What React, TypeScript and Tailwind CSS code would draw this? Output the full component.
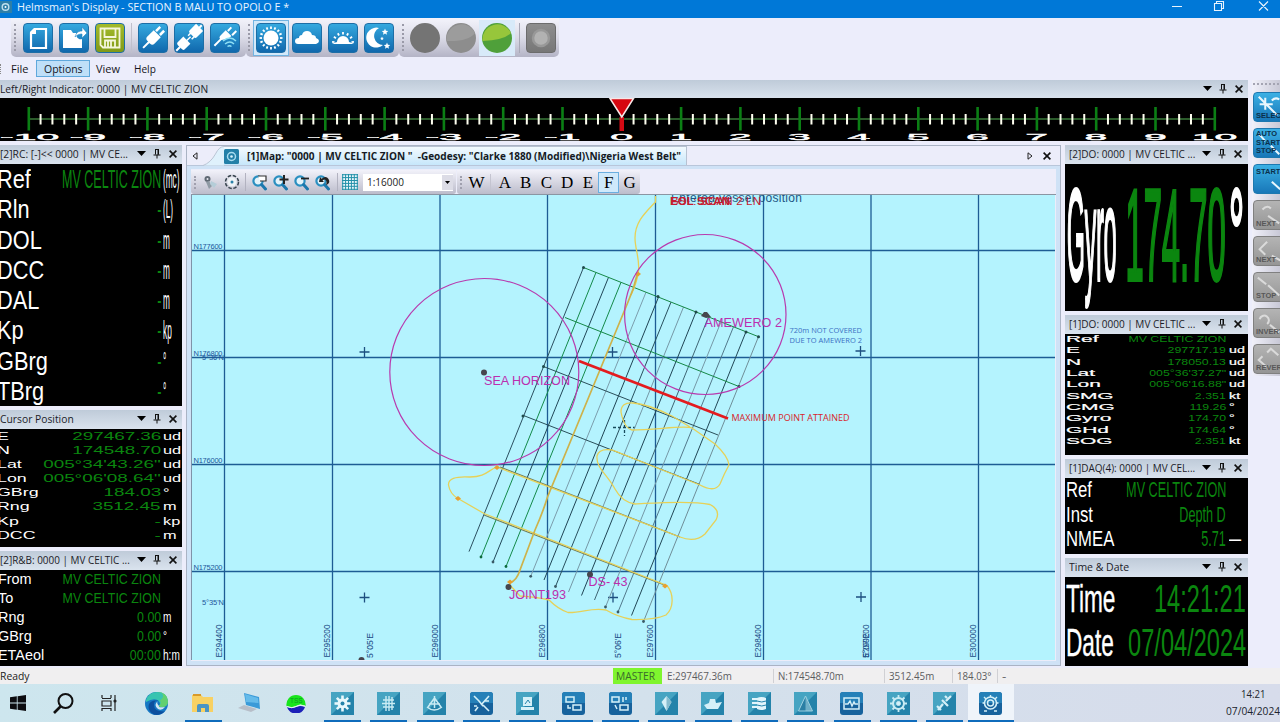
import React, { useLayoutEffect, useRef } from "react";

/* Text squeezed or widened so that it fills the width of its box. */
function Fit({ className = "", children }: { className?: string; children: string }) {
  const box = useRef<HTMLSpanElement>(null);
  const ink = useRef<HTMLSpanElement>(null);
  useLayoutEffect(() => {
    if (box.current && ink.current) {
      const s = box.current.clientWidth / ink.current.offsetWidth;
      ink.current.style.transform = `scaleX(${s})`;
    }
  }, []);
  return (
    <span ref={box} className={`block shrink-0 whitespace-nowrap ${className}`}>
      <span ref={ink} className="inline-block origin-left">{children}</span>
    </span>
  );
}

function Pin() {
  return (
    <svg className="h-[10px] w-[8px]" viewBox="0 0 8 10" fill="none" stroke="#111" strokeWidth="1">
      <path d="M2 .5h4M2.5 .5v5M5.5 .5v5M5 1v5M.5 6h7M4 6v3.5" />
    </svg>
  );
}
function Cross() {
  return (
    <svg className="h-[8px] w-[8px]" viewBox="0 0 8 8" stroke="#111" strokeWidth="1.6">
      <path d="M.6.6l6.8 6.8M7.4.6L.6 7.4" />
    </svg>
  );
}
function Caret() {
  return (
    <svg className="-mr-px h-[5px] w-[9px]" viewBox="0 0 9 5" fill="#000"><path d="M0 0h9L4.5 5z" /></svg>
  );
}

function Header({ title, fit, pad = "pr-[5px]" }: { title: string; fit: string; pad?: string }) {
  return (
    <div className={`flex h-[19px] shrink-0 items-center bg-gradient-to-b from-[#bfcbd9] to-[#dae3ee] pb-[2px] text-[11px] leading-[17px] text-[#1c1c28] ${pad}`}>
      <Fit className={fit}>{title}</Fit>
      <div className="flex-1" />
      <div className="flex items-center gap-[8px]">
        <Caret />
        <Pin />
        <Cross />
      </div>
    </div>
  );
}

type Row = [string, string, string];
function Readout({ rows, text, label, value, unit, unitBox, row }: {
  rows: Row[]; text: string; label: string; value: string; unit: string; unitBox: string; row: string;
}) {
  return (
    <div className={`font-['Liberation_Sans',sans-serif] ${text}`}>
      {rows.map((r, i) => (
        <div key={i} className={`flex justify-between whitespace-nowrap ${row}`}>
          <div className="w-[50px] shrink-0"><span className={`inline-block origin-left text-white ${label}`}>{r[0]}</span></div>
          <div className="flex w-[60px] flex-1 justify-end"><span className={`inline-block origin-right text-[#0b860f] ${value}`}>{r[1]}</span></div>
          <div className={`shrink-0 ${unitBox}`}><span className={`inline-block origin-left text-white ${unit}`}>{r[2]}</span></div>
        </div>
      ))}
    </div>
  );
}

/* ---------- main toolbar ---------- */
function Tile({ children, tone = "from-[#35a9df] to-[#1068ad]" }: { children?: React.ReactNode; tone?: string }) {
  return (
    <div className={`flex h-[30px] w-[30px] shrink-0 items-center justify-center rounded-[4px] border border-[#1d6ea6] bg-gradient-to-b ${tone}`}>
      <svg viewBox="0 0 30 30" className="h-[30px] w-[30px] shrink-0" fill="#fff">{children}</svg>
    </div>
  );
}
function Grip() {
  return <div className="h-[27px] w-0 border-l-2 border-dotted border-[#9a9aa8]" />;
}
const strip = "flex h-[39px] items-center rounded-b-[5px] bg-gradient-to-b from-[#f3f3fb] via-[#dcdce8] to-[#b4b4c6]";
const star = (x: number, y: number, s: number) =>
  Array.from({ length: 10 }, (_, i) => {
    const r = i % 2 ? s * 0.45 : s, a = (i * Math.PI) / 5 - Math.PI / 2;
    return `${x + r * Math.cos(a)},${y + r * Math.sin(a)}`;
  }).join(" ");

function Toolbar() {
  return (
    <div className="flex h-[40px] pl-[11px]">
      <div className={`${strip} w-[235px] pl-[3px]`}>
        <Grip />
        <div className="ml-[7px] flex gap-[6px]">
          <Tile><path d="M12 6h11v19H8V10z" fill="none" stroke="#fff" strokeWidth="2.2" /><path d="M7 11V9l4-4h2v6z" /></Tile>
          <Tile><path d="M4 7h8l2 3h3c0 5 3 7 6 6v9H4z" /><path d="M16 14c1-4 3-6 7-6V4l5 6-5 5v-4c-3 0-5 1-7 3z" stroke="#2486c4" strokeWidth=".6" /></Tile>
          <Tile tone="from-[#a3bb2b] to-[#819a17]"><path d="M5.5 5.500h19v19H8l-2.500-2.500zM9.500 5.500v8.500h11V5.500M10 24.500v-7h10v7M13 18v6M16 18v6" fill="none" stroke="#f4f6dc" strokeWidth="1.8" /></Tile>
        </div>
        <div className="ml-[6px] h-[30px] w-px bg-[#c0c0cc]" />
        <div className="ml-[6px] flex gap-[6px]">
          <Tile><g transform="rotate(45 15 15)"><path d="M10 9h10v9q0 3-3 3h-4q-3 0-3-3zM11 2h2.500v6H11zM16.500 2H19v6h-2.500zM14 21h2v8h-2z" /></g></Tile>
          <Tile><g transform="rotate(45 15 15)"><path d="M10 0h10v9q0 2-2 2h-6q-2 0-2-2zM12 11h1.500v3H12zM17 11h1.500v3H17zM14.500 13h1.500v5h-1.500zM10 18h10v8q0 2-3 2h-4q-3 0-3-2zM14-3h2v4h-2zM14 28h2v5h-2z" /></g></Tile>
          <Tile><g transform="rotate(45 15 15)"><path d="M10 9h8v4l-4 6h-2q-2 0-2-3zM11 3h2v5h-2zM17 2h2v6h-2zM12 19h2v9h-2z" /></g><g fill="none" stroke="#8fe0f5" strokeWidth="1.400"><path d="M13 18q7-6 13 0M15 21q5-4 9 0M17.500 23.500q2-1.500 4 0" /></g></Tile>
        </div>
      </div>
      <div className={`${strip} w-[153px] pl-[2px]`}>
        <Grip />
        <div className="ml-[3px] flex h-[36px] w-[36px] shrink-0 items-center justify-center border border-[#72b4e2] bg-[#d3e9fa]">
          <Tile>
            <circle cx="15" cy="15" r="7.500" />
            <g stroke="#fff" strokeWidth="1.8">
              {Array.from({ length: 16 }, (_, i) => <path key={i} d="M15 6V3.500" transform={`rotate(${i * 22.5} 15 15)`} />)}
            </g>
          </Tile>
        </div>
        <div className="ml-[3px] flex gap-[6px]">
          <Tile><path d="M6 21q-3 0-3-3t4-3q0-3 3-3 1-4 5-4t5 4q4 0 4 3 3 1 3 3t-3 3z" /></Tile>
          <Tile>
            <path d="M4 21q4-2 5-2a6 6 0 0 1 12 0q1 0 5 2z" />
            <g stroke="#fff" strokeWidth="1.800">
              {Array.from({ length: 7 }, (_, i) => <path key={i} d="M15 11.500V9" transform={`rotate(${i * 28 - 84} 15 20)`} />)}
            </g>
          </Tile>
          <Tile>
            <path d="M15 5a10 10 0 1 0 4 17A9 9 0 0 1 15 5z" />
            <polygon points={star(21, 9, 3.4)} /><polygon points={star(23, 23, 3.400)} /><polygon points={star(18, 15.500, 2)} />
          </Tile>
        </div>
      </div>
      <div className={`${strip} w-[160px] pl-[3px]`}>
        <Grip />
        <svg className="ml-[6px] h-[30px] w-[30px] shrink-0" viewBox="0 0 30 30"><circle cx="15" cy="15" r="15" fill="#747474" /></svg>
        <svg className="ml-[6px] h-[30px] w-[30px] shrink-0" viewBox="0 0 30 30"><circle cx="15" cy="15" r="15" fill="#8d8d8d" /><path d="M.5 18A15 15 0 0 1 29 10Q22 19 .5 18z" fill="#9c9c9c" /></svg>
        <div className="ml-[3px] flex h-[36px] w-[36px] shrink-0 items-center justify-center bg-[#d8eaf9]">
          <svg className="h-[30px] w-[30px]" viewBox="0 0 30 30"><circle cx="15" cy="15" r="15" fill="#4fa03a" /><path d="M.5 18A15 15 0 0 1 29 10Q22 17 .5 18z" fill="#97c63b" /></svg>
        </div>
        <div className="ml-[4px] h-[30px] w-px bg-[#a8a8b6]" />
        <div className="ml-[6px] flex h-[30px] w-[30px] shrink-0 items-center justify-center rounded-[4px] border border-[#6c6c6c] bg-gradient-to-b from-[#8e8e8e] to-[#777]">
          <svg viewBox="0 0 20 20" className="h-[20px] w-[20px]"><circle cx="10" cy="10" r="8" fill="#b2b2b2" stroke="#989898" strokeWidth="2.5" /></svg>
        </div>
      </div>
    </div>
  );
}

/* ---------- left/right indicator ---------- */
function Ruler() {
  const step = 59.3;
  return (
    <svg className="block h-[43px] w-[1248px] bg-black" viewBox="0 98 1248 43">
      <path d="M28 119H1215" stroke="#3a7a3a" strokeWidth="1.6" />
      {Array.from({ length: 21 }, (_, i) => (
        <g key={i}>
          {i < 20 && [1, 2, 3, 4].map((k) => (
            <rect key={k} x={27.7 + i * step + k * 11.86} y="114" width="2" height="10.500" fill="#fffff0" />
          ))}
          <rect x={27.500 + i * step} y="107" width="2.600" height="23.500" fill="#0b7f14" />
          <text transform={`translate(${28.6 + i * step + (i < 10 ? (i ? 0 : 1) : 0)} 139.5) scale(4.4 1)`} textAnchor="middle" fontSize="9.300" fill="#fff" stroke="#fff" strokeWidth=".35" fontFamily="Liberation Sans, sans-serif">{i - 10}</text>
        </g>
      ))}
      <rect x="619.500" y="117" width="4.500" height="14" fill="#d40a14" />
      <path d="M610 98.500h23.500l-11.700 18.500z" fill="#d6060f" stroke="#f7e6e6" strokeWidth="1.500" />
    </svg>
  );
}

/* ---------- chart ---------- */
const lineTones = ["#2b4f60", "#148a4a", "#214758", "#148a4a", "", "#7b9dac", "#1f4454", "#28505e", "#7598a6", "#1f4454", "#3e6573", "#7598a6", "#52788a", "#214756", "#6f8e98"];
const lineEnds: [number, number][] = [[469, 551.6], [481, 557], [493, 562], [506, 566.500], [518, 571], [530.7, 576.3], [544, 580], [555.500, 586.500], [568.500, 592], [581.500, 595.500], [594.500, 600], [605.500, 607], [618, 612], [631.500, 615.500], [643.500, 621.500]];
const eastings: [number, string][] = [[221.500, "E294400"], [329.500, "E295200"], [437.500, "E296000"], [544.500, "E296800"], [653, "E297600"], [760.500, "E298400"], [868.500, "E299200"], [975.500, "E300000"]];

function Chart() {
  return (
    <svg className="block h-[465px] w-[863px] bg-[#b4f3fe]" viewBox="192 195 863 465" fill="none" fontFamily="Liberation Sans, sans-serif">
      <g stroke="#1d5c94" strokeWidth="1.3">
        {[224.500, 332.500, 440, 547.500, 655.500, 763.500, 871, 978.500].map((x) => <path key={x} d={`M${x} 195V660`} />)}
        {[250.500, 357.500, 464.500, 571.500].map((y) => <path key={y} d={`M192 ${y}H1055`} />)}
      </g>
      <g fill="#1d569c" fontSize="7.500">
        <text x="193.500" y="248.500" textLength="29">N177600</text>
        <text x="193.500" y="355.500" textLength="29">N176800</text>
        <text x="202" y="360" textLength="22">5°36'N</text>
        <text x="193.500" y="462.500" textLength="29">N176000</text>
        <text x="193.500" y="569.500" textLength="29">N175200</text>
        <text x="202" y="605" textLength="22">5°35'N</text>
      </g>
      <g fill="#1b4b86" fontSize="8.500">
        {eastings.map(([x, s]) => <text key={s} transform={`translate(${x} 657.500) rotate(-90)`} textLength="33" lengthAdjust="spacingAndGlyphs">{s}</text>)}
        <text transform="translate(372.500 658) rotate(-90)" textLength="25" lengthAdjust="spacingAndGlyphs">5°05'E</text>
        <text transform="translate(620.500 658) rotate(-90)" textLength="25" lengthAdjust="spacingAndGlyphs">5°06'E</text>
        <text transform="translate(868.500 658) rotate(-90)" textLength="25" lengthAdjust="spacingAndGlyphs">5°07'E</text>
      </g>
      <g stroke="#1d4f80" strokeWidth="1.3">
        {[[364.500, 352], [612.500, 352], [860.500, 351], [364.500, 597.500], [613, 597.500], [861, 597]].map(([x, y]) => (
          <path key={`${x}-${y}`} d={`M${x - 5} ${y}h10M${x} ${y - 5}v10`} />
        ))}
        <path d="M613 427.500h22M624.500 420v16" stroke="#174b5c" strokeDasharray="3 2" />
      </g>

      <g strokeWidth="1">
        {lineEnds.map(([x, y], i) => i !== 4 && (
          <g key={i}>
            <path d={`M${583.500 + 12.500 * i} ${267.500 + 4.94 * i}L${x} ${y}`} stroke={lineTones[i]} />
            {[1, 2, 3, 5, 7, 11, 12, 14].includes(i) && <circle cx={x} cy={y} r="1.400" fill={i === 1 || i === 3 ? "#0d6a3c" : "#3a5a66"} />}
          </g>
        ))}
        <path d="M583.500 267.500L758.500 336.700M565 317.500L739 386.500" stroke="#158846" />
        <path d="M543.500 366.500L718 435M523.500 415.500L700 484.500" stroke="#2a4f5a" />
        <path d="M500 467L680 537M484 515L667 586" stroke="#6f7d5c" strokeWidth="1.200" />
        <g fill="#1f4a4a">
          {[[583.500, 267.500], [543.500, 366.500], [523, 416], [658, 296.500], [696, 312], [746, 332], [758.500, 336.700], [739, 386.500]].map(([x, y]) => <circle key={x} cx={x} cy={y} r="1.500" />)}
        </g>
      </g>

      <g stroke="#e6d158" strokeWidth="1.300">
        <path d="M655.500 196V202C645 213 635 222 635 238C635 250 641 262 638 274Q637 282 631 295" />
        <path d="M497 467L680 537Q695 543 705 534L716 520Q721 510 710 504.500C690 500 655 503 635 504Q622 502 615 489C607 474 596 468 597 456Q599 448 612 450L700 485Q715 493 720 484Q724 474 729 465Q728 456 715 444L692 428C685 425 655 430 632 430Q624 428 621 412Q621 402 633 403Q648 404 672 416L690 427" />
        <path d="M497 467C488 470 486 477 470 477C455 476 448 479 448.500 485Q450 494 458 498.500L484 513.500L667 585.500C674 594 674 608 666 615Q655 620 632 619.500Q618 617 606 610C592 607 582 613 568 612.500Q558 609 549 600Q537 597 520 596L509 584" />
      </g>
      <path d="M637 275Q634 289 628 302L547.500 497Q543 512 535 530L520 570Q517 580 510 583" stroke="#cdb24a" strokeWidth="1.700" />
      <g fill="#e7a032">
        {[[638, 274], [497, 467.500], [458, 498.500], [665, 586], [510, 582]].map(([x, y]) => <path key={x} d={`M${x - 3} ${y}l3-2.500 3 2.500-3 2.500z`} />)}
      </g>

      <g stroke="#b83aae" strokeWidth="1.200">
        <ellipse cx="484.300" cy="372" rx="94.500" ry="93.500" />
        <ellipse cx="705.300" cy="314.500" rx="80.700" ry="80" />
      </g>
      <path d="M579 361L728 418.500" stroke="#e31b1f" strokeWidth="2.800" />
      <g fill="#46464e">
        <circle cx="484" cy="372.500" r="3" /><path d="M701 316l3-4h3l4 5-5 1z" />
        <circle cx="508.500" cy="587" r="3" /><circle cx="590" cy="574.500" r="3" /><circle cx="361.500" cy="660" r="3" />
      </g>
      <g fill="#bb2fae" fontSize="12.600">
        <text x="484" y="384.700" textLength="86">SEA HORIZON</text>
        <text x="704.500" y="326.700" textLength="77.500">AMEWERO 2</text>
        <text x="588.500" y="586" textLength="39">DS- 43</text>
        <text x="509" y="599" textLength="57">JOINT193</text>
      </g>
      <g fontFamily="Open Sans, sans-serif" fontSize="8">
        <text x="789.500" y="333" fill="#3a6fc4" textLength="72.500" lengthAdjust="spacingAndGlyphs">720m NOT COVERED</text>
        <text x="789.500" y="343" fill="#3a6fc4" textLength="72.500" lengthAdjust="spacingAndGlyphs">DUE TO AMEWERO 2</text>
        <text x="731.500" y="421.300" fill="#d8242a" fontSize="9" textLength="118" lengthAdjust="spacingAndGlyphs">MAXIMUM POINT ATTAINED</text>
      </g>
      <g fontSize="12">
        <text x="671" y="202" fill="#1e5684" textLength="131">Entered vessel position</text>
        <text x="670" y="204.500" fill="#c61c30" fontWeight="700" fontSize="11.500" textLength="60">EOL SCAN</text>
        <text x="671" y="204.500" fill="#c61c30" fontSize="11.500" textLength="90">BSL: SCAN 2 LN</text>
      </g>
    </svg>
  );
}

/* ---------- map window toolbar ---------- */
function Zoomer({ children }: { children?: React.ReactNode }) {
  return (
    <svg className="h-[17px] w-[17px] shrink-0" viewBox="0 0 17 17" fill="none">
      <circle cx="7" cy="7" r="4.600" stroke="#2a8fc0" strokeWidth="2.200" fill="#e4f3fa" />
      <path d="M10.500 10.500l4 4.500" stroke="#1b78ad" strokeWidth="3" strokeLinecap="round" />
      {children}
    </svg>
  );
}
function Letter({ c, on }: { c: string; on?: boolean }) {
  return (
    <div className={`flex h-[21px] w-[20.800px] items-center justify-center font-['Liberation_Serif',serif] text-[17px] leading-none text-black ${on ? "border border-[#6aaee0] bg-[#cfe9fb]" : ""}`}>{c}</div>
  );
}
const mini = "flex h-[24px] shrink-0 items-center rounded-b-[3px] bg-gradient-to-b from-[#f2f2fa] to-[#bcbccb]";

function MapWindow() {
  return (
    <div className="flex w-[875px] flex-col border border-[#aab3c4] bg-[#ecedfa]">
      <div className="flex h-[20px] shrink-0 items-stretch border-b border-[#b9c6da]">
        <div className="flex w-[16px] items-center justify-center"><svg className="h-[8px] w-[6px]" viewBox="0 0 6 8"><path d="M5 .8v6.400L1 4z" fill="none" stroke="#222" /></svg></div>
        <svg className="h-[20px] w-[21px] shrink-0" viewBox="0 0 22 20"><path d="M0 20Q8 17 13 8Q17 0 22 0v20z" fill="#dff1fc" /><path d="M0 20Q8 17 13 8Q17 0 22 0" fill="none" stroke="#b8c2d2" /></svg>
        <div className="flex w-[463px] items-center border-r border-t border-[#b8c2d2] bg-gradient-to-b from-[#f3fafe] to-[#c6e7fb] text-[11px] font-bold leading-[18px] text-[#151a24]">
          <svg className="h-[15px] w-[15px] shrink-0" viewBox="0 0 15 15"><rect width="15" height="15" rx="1.500" fill="#2380a8" /><circle cx="7.500" cy="7.500" r="4" fill="none" stroke="#a8dcf0" strokeWidth="1.500" /><circle cx="7.500" cy="7.500" r="1.300" fill="#d9f2fa" /></svg>
          <Fit className="ml-[8px] w-[434px] whitespace-pre">{"[1]Map: \"0000 | MV CELTIC ZION \"  -Geodesy: \"Clarke 1880 (Modified)\\Nigeria West Belt\""}</Fit>
        </div>
        <div className="flex flex-1 items-center justify-end gap-[10px] pr-[9px]">
          <svg className="h-[8px] w-[6px]" viewBox="0 0 6 8"><path d="M1 .8v6.400L5 4z" fill="none" stroke="#222" /></svg>
          <Cross />
        </div>
      </div>
      <div className="flex flex-1 flex-col border-4 border-t-[3px] border-[#cfe2f6] bg-[#ecedfa]">
        <div className="flex h-[26px] shrink-0 items-end border-b border-[#8b95a2]">
          <div className={`${mini} w-[265px] pl-[3px]`}>
            <div className="h-[13px] border-l-2 border-dotted border-[#a0a0ae]" />
            <svg className="ml-[7px] h-[15px] w-[15px]" viewBox="0 0 15 15"><circle cx="4.500" cy="4" r="3" fill="#606a74" /><circle cx="4.500" cy="4" r="1" fill="#e8e8f0" /><path d="M3 7l3 7 3-3-3-5z" fill="#8f9aa4" /><path d="M8 6l6 3-3 4-4-4z" fill="#b5cdd8" /></svg>
            <svg className="ml-[6px] h-[16px] w-[16px]" viewBox="0 0 16 16" fill="none"><circle cx="8" cy="8" r="6.500" stroke="#35424c" strokeWidth="1.500" strokeDasharray="3.500 1.600" /><circle cx="8" cy="8" r="4.500" fill="#eef3f6" /><circle cx="8" cy="8" r="1.500" fill="#2a80a8" /></svg>
            <div className="mx-[5px] h-[18px] w-px bg-[#b2b2c0]" />
            <div className="flex gap-[4px]">
              <Zoomer><path d="M7 2h8v5H9" fill="#fff" stroke="#333" strokeWidth="1.200" /></Zoomer>
              <Zoomer><path d="M12 1v9M7.500 5.500h9" stroke="#222" strokeWidth="2" /></Zoomer>
              <Zoomer><path d="M8 4.500h8" stroke="#222" strokeWidth="1.800" /></Zoomer>
              <Zoomer><path d="M5 8l1-5 1.500 1.800Q12 1 14.500 5T12 11q1.500-4-1-5.500-1.500 0-2.500 1L10 8z" fill="#222" /></Zoomer>
            </div>
            <div className="ml-[6px] mr-[4px] h-[18px] w-px bg-[#b2b2c0]" />
            <svg className="h-[16px] w-[16px]" viewBox="0 0 16 16"><rect width="16" height="16" fill="#e9f6fa" /><path d="M.7 0v16M3.600 0v16M6.500 0v16M9.400 0v16M12.300 0v16M15.300 0v16M0 .7h16M0 3.600h16M0 6.500h16M0 9.400h16M0 12.300h16M0 15.300h16" stroke="#2390a8" strokeWidth="1" /></svg>
            <div className="ml-[5px] flex h-[17px] w-[90px] items-center bg-white text-[10px] text-[#222]">
              <Fit className="ml-[4px] w-[37px]">1:16000</Fit>
              <div className="flex-1" />
              <div className="flex h-[15px] w-[11px] items-center justify-center bg-[#dcdce6]"><svg className="h-[3px] w-[5px]" viewBox="0 0 5 3"><path d="M0 0h5L2.500 3z" /></svg></div>
            </div>
          </div>
          <div className={`${mini} ml-[1px] w-[183px] pl-[3px]`}>
            <div className="h-[13px] border-l-2 border-dotted border-[#a0a0ae]" />
            <div className="ml-[4px]"><Letter c="W" /></div>
            <div className="ml-[3px] h-[16px] w-px bg-[#c4c4d0]" />
            <div className="ml-[4px] flex">
              {["A", "B", "C", "D", "E", "F", "G"].map((c) => <Letter key={c} c={c} on={c === "F"} />)}
            </div>
          </div>
        </div>
        <div className="flex border-l border-[#7f93a8]"><Chart /></div>
      </div>
    </div>
  );
}

/* ---------- right command bar ---------- */
const commands: { lines: string[]; live: boolean; at: string; art: string }[] = [
  { lines: ["SELECT"], live: true, at: "justify-end pb-px", art: "M4 4l20 20M11 5v13M5 12h14M18 8q4-4 8-1" },
  { lines: ["AUTO", "START", "STOP"], live: true, at: "justify-center", art: "M4 5l7 8M17 18l9 9" },
  { lines: ["START"], live: true, at: "justify-start pt-[3px]", art: "M18 18l9 8" },
  { lines: ["NEXT"], live: false, at: "justify-end pb-px", art: "M8 9q5-5 9-1M14 16l12 8" },
  { lines: ["NEXT"], live: false, at: "justify-end pb-px", art: "M13 5l-8 8 6 6M18 20l9 5" },
  { lines: ["STOP"], live: false, at: "justify-end pb-px", art: "M3 5l9 7M14 13l12 11" },
  { lines: ["INVERT"], live: false, at: "justify-end pb-px", art: "M5 11a5 5 0 1 1 8 5M16 17l10 8" },
  { lines: ["REVERSE"], live: false, at: "justify-end pb-px", art: "M13 8l4-4 8 7M8 12l-4 4 8 7" },
];
function CommandBar() {
  return (
    <div className="w-[32px] shrink-0 overflow-hidden pl-[4px]">
      <div className="flex h-[296px] w-[36px] flex-col gap-[6px] rounded-b-[4px] bg-gradient-to-r from-[#f1f1fa] to-[#bdbdcc] pl-px">
        <div className="mt-[3px] h-[3px] w-[30px] shrink-0 border-t-2 border-dotted border-[#a4a4b2]" />
        {commands.map((c, i) => (
          <div key={i} className={`relative flex h-[30px] w-[32px] shrink-0 flex-col rounded-[4px] border pl-[2px] text-left font-['Liberation_Sans',sans-serif] text-[7.500px] font-bold leading-[8.500px] ${c.at} ${c.live ? "border-[#1d78b0] bg-gradient-to-b from-[#3bb0e4] to-[#1877b8] text-[#0b2f4a]" : "border-[#808080] bg-gradient-to-b from-[#b4b4b4] to-[#959595] text-[#585858]"}`}>
            <svg className="absolute left-0 top-0 h-[28px] w-[30px]" viewBox="0 0 30 30" fill="none" stroke={c.live ? "#eaf7fd" : "#dadada"} strokeWidth="2.200"><path d={c.art} /></svg>
            {c.lines.map((l) => <span key={l} className="relative">{l}</span>)}
          </div>
        ))}
      </div>
    </div>
  );
}

/* ---------- taskbar ---------- */
const apps: React.ReactNode[] = [
  <g key="gear"><g stroke="#e8f8fc" strokeWidth="2.600">{[0, 45, 90, 135].map((a) => <path key={a} d="M11.500 3.500v16" transform={`rotate(${a} 11.500 11.500)`} />)}</g><circle cx="11.500" cy="11.500" r="5" fill="#e8f8fc" /><circle cx="11.500" cy="11.500" r="2" fill="#2483aa" /></g>,
  <g key="globe" fill="none" stroke="#c9ecf4" strokeWidth="1.400"><path d="M9 4v15M12 4v15M15 5v13M6 8h11M5 11.500h13M6 15h11" /></g>,
  <g key="bell" fill="none" stroke="#c9ecf4" strokeWidth="1.500"><path d="M11.500 4v12M11.500 6L5 15M11.500 6l6.500 9M4 15q7 6 15 0M6 12h11" /></g>,
  <g key="sat" fill="none" stroke="#d5f0f8" strokeWidth="1.600"><path d="M4 4l5 5M19 4l-8 9M5 19l3-4M13 13l6 6M9 9l4 5M15 9h4M4 14h3" /></g>,
  <g key="print" fill="#d5f0f8"><path d="M7 5h9v9H7zM5 15h13v3H5z" /><path d="M9 12l3-4 2 3" stroke="#2483aa" fill="none" /></g>,
  <g key="net" fill="none" stroke="#d5f0f8" strokeWidth="1.500"><path d="M4 5h8v5H4zM11 13h8v5h-8zM6 13v3h3" /></g>,
  <g key="nets" fill="none" stroke="#d5f0f8" strokeWidth="1.500"><path d="M3 5h7v5H3zM14 5v5M17 5v3M11 13h8v5h-8zM6 13l2 4" /></g>,
  <g key="gem"><path d="M11.500 4l5 6-5 9-5-9z" fill="#d5f0f8" /><path d="M11.500 4v15l5-9z" fill="#86bccf" /></g>,
  <g key="ship" fill="#d5f0f8"><path d="M3 13l5-2 1-4h5l1 4 6-1-4 7H6z" /></g>,
  <g key="db" fill="#e2f5fb"><path d="M4 6h7v2H4zM4 10h6v2H4zM4 14h7v2H4z" /><path d="M9 6q4-2 9 0v11q-5 2-9 0z" /><path d="M9 9q5 2 9 0M9 13q5 2 9 0" stroke="#2483aa" fill="none" /></g>,
  <g key="tri"><path d="M11.500 4l7 15h-14z" fill="#6fb0c8" /><path d="M11.500 4v15l-7 0z" fill="#2a7fa4" /><path d="M11.500 4l7 15h-14z" fill="none" stroke="#9bd0e0" /></g>,
  <g key="wave" fill="none" stroke="#d5f0f8" strokeWidth="1.500"><path d="M4 6h15v11H4zM5 12h3l2-3 2 5 2-4 1 2h3" /></g>,
  <g key="helm" fill="none" stroke="#c9ecf4"><circle cx="11.500" cy="11.500" r="5.500" strokeWidth="2" /><circle cx="11.500" cy="11.500" r="2" fill="#d5f0f8" /><path d="M11.500 3v3M11.500 17v3M3 11.500h3M17 11.500h3M5.500 5.500l2 2M15.500 15.500l2 2M17.500 5.500l-2 2M7.500 15.500l-2 2" strokeWidth="1.800" /></g>,
  <g key="sat2" fill="none" stroke="#d5f0f8" strokeWidth="2.200"><path d="M18 4l-5 5M10 12l-5 6M9 8l6 6M12 4l2 2M4 14l4 4" /></g>,
  <g key="rose" fill="none" stroke="#d5f0f8"><circle cx="11.500" cy="11" r="6" strokeWidth="1.600" /><circle cx="11.500" cy="11" r="3" strokeWidth="1.500" /><path d="M11.500 3v2M5 5l2 2M18 5l-2 2M3.500 11h2M17.500 11h2M5 19h3M15 19h3" strokeWidth="1.400" /></g>,
];
const darkApp = [3, 5, 6, 11, 14];

function Taskbar() {
  const slot = "relative flex h-[38px] w-[46.35px] shrink-0 items-center justify-center";
  return (
    <div className="flex h-[38px] shrink-0 bg-gradient-to-r from-[#cde6ee] via-[#d3e1ec] to-[#d7dceb]">
      <div className="flex w-[133.500px] shrink-0 items-center pl-[10px]">
        <svg className="h-[16px] w-[16px]" viewBox="0 0 16 16"><path d="M0 2.300l6.800-1v6.300H0zM7.600 1.200L16 0v7.600H7.600zM0 8.400h6.800v6.300l-6.800-1zM7.600 8.400H16V16l-8.400-1.200z" fill="#0c0c10" /></svg>
        <svg className="ml-[27px] h-[21px] w-[21px]" viewBox="0 0 21 21" fill="none" stroke="#111" strokeWidth="2"><circle cx="12.500" cy="8" r="7" /><path d="M8 13L1 20" strokeWidth="2.600" /></svg>
        <svg className="ml-[27px] h-[16px] w-[16px]" viewBox="0 0 16 16" fill="none" stroke="#222" strokeWidth="1.200"><path d="M1 0v3M10 0v3M1 3.500h9M1 6h9v5H1zM1 16v-2.500h9V16M14 0v16" /><circle cx="14" cy="6" r="1" fill="#222" /></svg>
      </div>
      <div className={slot}>
        <svg className="h-[23px] w-[23px]" viewBox="0 0 23 23"><circle cx="11.500" cy="11.500" r="11.500" fill="#1678c4" /><path d="M1 8Q4 0 12 0q10 0 11 9 0 6-6 6-3 0-3-1.500Q16 12 14 9.500 10 5 1 10z" fill="#38c4b0" /><path d="M12 0q10 0 11 9 0 6-6 6-3 0-3-1.500 3-2 1-5Q20 5 17 1.300z" fill="#62d070" /><path d="M14 9q-5-1-5 4 0 7 11 6.500Q15 24 9 22.500 2 19 4 12 7 7 14 9z" fill="#0c4f9e" /><path d="M13 9q-2 2 1 5-1 2 6 1-3 4-7 2-5-4 0-8z" fill="#d3e6f2" /></svg>
      </div>
      <div className={slot}>
        <svg className="h-[21px] w-[22px]" viewBox="0 0 22 21"><path d="M0 2h9l2 2h10v15H0z" fill="#f8d163" /><path d="M1 1h8v2H1z" fill="#d89a2a" /><path d="M5 19v-6q0-2 2-2h8q2 0 2 2v6h-4v-4H9v4z" fill="#4a94c4" /></svg>
        <span className="absolute bottom-0 left-[5px] h-[2px] w-[37px] bg-[#0f6cbc]" />
      </div>
      <div className={slot}>
        <svg className="h-[20px] w-[23px]" viewBox="0 0 23 20"><path d="M6 0l15 4 1 12-14-4z" fill="#3a9ad8" /><path d="M7 1l13 4 .500 5L8 9z" fill="#65bbea" /><path d="M0 15l6-3 13 4-6 3z" fill="#b7bec8" /></svg>
      </div>
      <div className={slot}>
        <svg className="h-[20px] w-[20px]" viewBox="0 0 20 20"><path d="M.500 13a9.600 9.600 0 1 1 19 0Q14 10 10 13 6 15 .500 13z" fill="#18e51c" /><path d="M1 14q5 2 9 0t9 0a9.500 9.500 0 0 1-18 0z" fill="#1c20b8" /><path d="M1 13.500q5 2.500 9 0t9-.500" fill="none" stroke="#e6f6ee" strokeWidth="1" /><text x="4" y="10" fontSize="6.500" fill="#0a9a20" fontFamily="Liberation Sans">TSS</text></svg>
      </div>
      {apps.map((a, i) => (
        <div key={i} className={`${slot} ${i === 14 ? "bg-[#eff4fa]" : ""}`}>
          <svg className="h-[23px] w-[23px]" viewBox="0 0 23 23">
            <rect width="23" height="23" rx={darkApp.includes(i) ? 3 : 0} fill={darkApp.includes(i) ? "#17629c" : "#2483aa"} />
            {!darkApp.includes(i) && <path d="M0 0h23L0 23z" fill="#46a4c2" />}
            {darkApp.includes(i) && <path d="M0 3q0-3 3-3h17q3 0 3 3v8H0z" fill="#2580b8" />}
            {a}
          </svg>
          <span className={`absolute bottom-0 h-[2px] bg-[#0f6cbc] ${i === 14 ? "left-0 w-full" : "left-[5px] w-[37px]"}`} />
        </div>
      ))}
      <div className="flex-1" />
      <div className="flex w-[54px] shrink-0 flex-col items-center pt-[2px] text-[10px] leading-[17px] text-[#20242c]">
        <Fit className="w-[25px]">14:21</Fit>
        <Fit className="w-[54px]">07/04/2024</Fit>
      </div>
    </div>
  );
}

export default function App() {
  return (
    <div className="flex h-[722px] w-[1280px] flex-col overflow-hidden bg-[#ecedfb] font-['Open_Sans','Noto_Sans',sans-serif]">
      <div className="flex h-[18px] shrink-0 items-center bg-[#0078d7] text-[11px] leading-[14px] text-[#eaf4ff]">
        <svg className="-mt-[4px] h-[12px] w-[12px]" viewBox="0 0 12 12"><rect width="12" height="12" fill="#2e7fa8" /><circle cx="5.500" cy="6" r="3.300" fill="none" stroke="#bfe0ee" strokeWidth="1.400" /><circle cx="5.500" cy="6" r="1" fill="#fff" /></svg>
        <Fit className="-mt-[4px] ml-[5px] w-[272px]">Helmsman's Display - SECTION B MALU TO OPOLO E *</Fit>
        <div className="flex-1" />
        <svg className="-mt-[6px] mr-[10px] h-[12px] w-[98px]" viewBox="0 0 98 12" fill="none" stroke="#e8f3fd" strokeWidth="1.100"><path d="M0 6.500h10M42.500 3.500h7v7h-7zM44.500 3.500v-2h7v7h-2M87 1.500l9 9M96 1.500l-9 9" /></svg>
      </div>

      <Toolbar />

      <div className="flex h-[22px] shrink-0 items-center pb-px text-[11px] leading-[17px] text-[#15151c]">
        <div className="h-[10px] border-l border-dotted border-[#888]" />
        <Fit className="ml-[10px] w-[17px]">File</Fit>
        <div className="ml-[8px] flex h-[17px] w-[54px] items-center justify-center border border-[#5fa8dc] bg-[#bfdff8]"><Fit className="w-[39px]">Options</Fit></div>
        <Fit className="ml-[6px] w-[24px]">View</Fit>
        <Fit className="ml-[14px] w-[22px]">Help</Fit>
      </div>

      <div className="flex h-[588px] shrink-0">
        <div className="w-[1248px] shrink-0">
          <Header title="Left/Right Indicator: 0000 | MV CELTIC ZION" fit="w-[208px]" />
          <div className="-mt-px"><Ruler /></div>
          <div className="mt-[4px] flex gap-[4px]">
            <div className="flex w-[182px] shrink-0 flex-col">
              <Header title="[2]RC: [-]<< 0000 | MV CE..." fit="w-[128px]" />
              <div className="h-[242px] overflow-hidden bg-black">
                <Readout text="text-[25px]" row="h-[30.250px] leading-[30.250px]" label="scale-x-[.87] -ml-[3px]" value="scale-x-[.5]" unit="scale-x-[.33]" unitBox="w-[21px] pl-[2px]"
                  rows={[["Ref", "MV CELTIC ZION", "(mc)"], ["Rln", "-", "(L)"], ["DOL", "-", "m"], ["DCC", "-", "m"], ["DAL", "-", "m"], ["Kp", "-", "kp"], ["GBrg", "-", "°"], ["TBrg", "-", "°"]]} />
              </div>
              <div className="h-[4px]" />
              <Header title="Cursor Position" fit="w-[74px]" />
              <div className="h-[118px] overflow-hidden bg-black">
                <Readout text="text-[11.500px]" row="h-[14.100px] leading-[14.100px]" label="scale-x-[1.55] -ml-[3px]" value="scale-x-[1.64]" unit="scale-x-[1.42]" unitBox="w-[21px] pl-[2px]"
                  rows={[["E", "297467.36", "ud"], ["N", "174548.70", "ud"], ["Lat", "005°34'43.26\"", "ud"], ["Lon", "005°06'08.64\"", "ud"], ["GBrg", "184.03", "°"], ["Rng", "3512.45", "m"], ["Kp", "-", "kp"], ["DCC", "-", "m"]]} />
              </div>
              <div className="h-[4px]" />
              <Header title="[2]R&B: 0000 | MV CELTIC ..." fit="w-[130px]" />
              <div className="h-[96px] overflow-hidden bg-black">
                <Readout text="-mt-px text-[15.500px]" row="h-[19px] leading-[19px]" label="scale-x-[.93] -ml-[2px]" value="scale-x-[.8]" unit="scale-x-[.65]" unitBox="w-[21px] pl-[2px]"
                  rows={[["From", "MV CELTIC ZION", ""], ["To", "MV CELTIC ZION", ""], ["Rng", "0.00", "m"], ["GBrg", "0.00", "°"], ["ETAeol", "00:00", "h:m"]]} />
              </div>
            </div>

            <MapWindow />

            <div className="flex w-[183px] shrink-0 flex-col">
              <Header title="[2]DO: 0000 | MV CELTIC ..." fit="w-[126px]" pad="pl-[4px] pr-[6px]" />
              <div className="h-[147px] overflow-hidden bg-black">
                <Readout text="-mt-[2px] text-[130px]" row="h-[147px] leading-[147px]" label="ml-[2px] scale-x-[.176] [-webkit-text-stroke:4px_#fff]" value="scale-x-[.252] [-webkit-text-stroke:4px_#0b860f]" unit="scale-x-[.29] [-webkit-text-stroke:4px_#fff]" unitBox="w-[22px] pl-[3px]"
                  rows={[["Gyro", "174.70", "°"]]} />
              </div>
              <div className="h-[4px]" />
              <Header title="[1]DO: 0000 | MV CELTIC ..." fit="w-[126px]" pad="pl-[4px] pr-[6px]" />
              <div className="h-[121px] overflow-hidden bg-black">
                <Readout text="text-[9.500px] -mt-px" row="h-[11.330px] leading-[11.330px]" label="scale-x-[2.200] ml-px [-webkit-text-stroke:.2px_#fff]" value="scale-x-[1.300]" unit="scale-x-[1.500] [-webkit-text-stroke:.2px_#fff]" unitBox="w-[22px] pl-[3px]"
                  rows={[["Ref", "MV CELTIC ZION", ""], ["E", "297717.19", "ud"], ["N", "178050.13", "ud"], ["Lat", "005°36'37.27\"", "ud"], ["Lon", "005°06'16.88\"", "ud"], ["SMG", "2.351", "kt"], ["CMG", "119.26", "°"], ["Gyro", "174.70", "°"], ["GHd", "174.64", "°"], ["SOG", "2.351", "kt"]]} />
              </div>
              <div className="h-[4px]" />
              <Header title="[1]DAQ(4): 0000 | MV CEL..." fit="w-[126px]" pad="pl-[4px] pr-[6px]" />
              <div className="h-[76px] overflow-hidden bg-black">
                <Readout text="text-[22px]" row="h-[24.500px] leading-[24.500px]" label="ml-px scale-x-[.76]" value="scale-x-[.575]" unit="scale-x-[.55]" unitBox="w-[22px] pl-[3px]"
                  rows={[["Ref", "MV CELTIC ZION", ""], ["Inst", "Depth D", ""], ["NMEA", "5.71", "—"]]} />
              </div>
              <div className="h-[4px]" />
              <Header title="Time & Date" fit="w-[60px]" pad="pl-[4px] pr-[6px]" />
              <div className="h-[89px] overflow-hidden bg-black">
                <Readout text="text-[39px]" row="h-[44px] leading-[44px]" label="ml-px scale-x-[.580] [-webkit-text-stroke:.4px_#fff]" value="scale-x-[.605]" unit="" unitBox="w-[2px]"
                  rows={[["Time", "14:21:21", ""], ["Date", "07/04/2024", ""]]} />
              </div>
            </div>
          </div>
        </div>
        <CommandBar />
      </div>

      <div className="flex h-[16px] shrink-0 items-center bg-[#f0eff0] text-[10px] leading-[16px] text-[#5c5c60]">
        <Fit className="w-[29px] text-[#222]">Ready</Fit>
        <div className="ml-[584px] flex h-[16px] w-[49px] items-center bg-[#7ff52e] pl-[3px] text-[#3a6a2c]"><Fit className="w-[39px]">MASTER</Fit></div>
        <Fit className="ml-[5px] w-[65px]">E:297467.36m</Fit>
        <div className="ml-[41px] h-[14px] w-px bg-[#d0d0d4]" />
        <Fit className="ml-[4px] w-[66px]">N:174548.70m</Fit>
        <div className="ml-[40px] h-[14px] w-px bg-[#d0d0d4]" />
        <Fit className="ml-[4px] w-[45px]">3512.45m</Fit>
        <div className="ml-[18px] h-[14px] w-px bg-[#d0d0d4]" />
        <Fit className="ml-[4px] w-[35px]">184.03°</Fit>
        <div className="ml-[5px] h-[14px] w-px bg-[#d0d0d4]" />
        <Fit className="ml-[4px] w-[4px]">-</Fit>
      </div>

      <Taskbar />
    </div>
  );
}
